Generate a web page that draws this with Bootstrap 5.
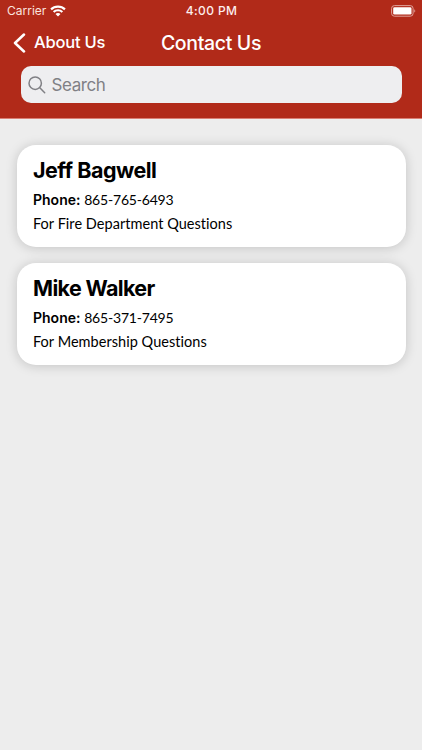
<!DOCTYPE html>
<html lang="en">
<head>
<meta charset="utf-8">
<meta name="viewport" content="width=device-width, initial-scale=1">
<title>Contact Us</title>
<link href="https://cdn.jsdelivr.net/npm/bootstrap@5.3.0/dist/css/bootstrap.min.css" rel="stylesheet">
<style>
body{background:#ededed;font-family:Inter,"Liberation Sans",sans-serif;color:#000;min-height:100vh}
.app-top{background:#b12a19;height:119px;color:#fff;border-bottom:1px solid #d97f74}
.status-bar{height:22px;padding:0 6px 0 7px;font-size:12px;line-height:22px}
.carrier{letter-spacing:0;color:#fbe3df}
.clock{font-weight:500;letter-spacing:.4px;color:#fdeeec}
.side{flex:1 1 0}
.title-bar{height:44px;padding:0 13px}
.back-link{color:#fff;font-size:16.500px;font-weight:500;letter-spacing:-.2px;gap:8px;padding-top:1px}
.page-title{font-size:19.500px;font-weight:500;letter-spacing:-.35px;line-height:24px;padding-bottom:3px}
.search-box{height:37px;margin:0 20.500px;background:#eeeef0;border-radius:10px;color:#808085;padding-left:7px;gap:6px}
.search-box input{font-size:17px;letter-spacing:-.4px;color:#808085;outline:0;line-height:24px}
.search-box input::placeholder{color:#808085;opacity:1}
.contact-list{padding:25.500px 16.500px;gap:16px}
.contact-card{height:102px;border-radius:19px;padding:11.500px 16.500px 0;box-shadow:0 1px 12px rgba(0,0,0,.18)}
.contact-name{font-size:21.500px;font-weight:650;line-height:28px;letter-spacing:-.5px}
.contact-name.wide-initial{letter-spacing:-.65px}
.contact-line{font-family:Lato,"Liberation Sans",sans-serif;font-size:14.500px;line-height:24px;letter-spacing:.04px;font-variant-ligatures:none}
.contact-line strong{font-family:Inter,"Liberation Sans",sans-serif;font-size:14px;font-weight:600;letter-spacing:0}
.phone-number{font-size:14px;letter-spacing:-.2px}
</style>
</head>
<body>
<header class="app-top">
  <div class="status-bar d-flex align-items-center">
    <div class="side d-flex align-items-center gap-1">
      <span class="carrier">Carrier</span>
      <svg width="16" height="12" viewBox="0 0 16 12" fill="#fff" aria-hidden="true"><path d="M8 .5C5 .5 2.300 1.700.3 3.600l1.500 1.600a9 9 0 0 1 12.400 0l1.500-1.600C13.700 1.700 11 .5 8 .5zM8 4.200c-2 0-3.800.8-5.100 2l1.500 1.600a5.200 5.200 0 0 1 7.200 0l1.500-1.600A7.300 7.300 0 0 0 8 4.200zM8 7.900c-1 0-1.900.4-2.500 1L8 11.500l2.500-2.600A3.600 3.600 0 0 0 8 7.900z"/></svg>
    </div>
    <div class="clock">4:00 PM</div>
    <div class="side d-flex justify-content-end">
      <svg width="25" height="12" viewBox="0 0 25 12" aria-hidden="true"><rect x=".6" y=".6" width="21.500" height="10.600" rx="2.800" fill="none" stroke="#dfa39c"/><rect x="2.200" y="2.200" width="18.300" height="7.400" rx="1.300" fill="#fff"/><path d="M23.300 4.200v3.400c1.300-.4 1.300-3 0-3.400z" fill="#dfa39c"/></svg>
    </div>
  </div>
  <nav class="title-bar d-flex align-items-center">
    <div class="side"><a href="#" class="back-link d-inline-flex align-items-center text-decoration-none"><svg width="13" height="20" viewBox="0 0 13 20" fill="none" stroke="#fff" stroke-width="2.500" stroke-linecap="round" stroke-linejoin="round" aria-hidden="true"><path d="M11 1.500 2 10l9 8.500"/></svg>About Us</a></div>
    <h1 class="page-title m-0">Contact Us</h1>
    <div class="side"></div>
  </nav>
  <div class="search-box d-flex align-items-center">
    <svg width="18" height="18" viewBox="0 0 18 18" fill="none" stroke="#808085" stroke-width="1.500" stroke-linecap="round" aria-hidden="true"><circle cx="7.200" cy="7.200" r="6.200"/><path d="m11.800 11.800 4.900 4.900"/></svg>
    <input type="text" class="border-0 bg-transparent p-0 flex-grow-1" placeholder="Search" aria-label="Search">
  </div>
</header>
<main class="contact-list d-flex flex-column">
  <article class="contact-card bg-white">
    <h2 class="contact-name m-0">Jeff Bagwell</h2>
    <div class="contact-line mt-1"><strong>Phone:</strong> <span class="phone-number">865-765-6493</span></div>
    <div class="contact-line">For Fire Department Questions</div>
  </article>
  <article class="contact-card bg-white">
    <h2 class="contact-name wide-initial m-0">Mike Walker</h2>
    <div class="contact-line mt-1"><strong>Phone:</strong> <span class="phone-number">865-371-7495</span></div>
    <div class="contact-line">For Membership Questions</div>
  </article>
</main>
<script src="https://cdn.jsdelivr.net/npm/bootstrap@5.3.0/dist/js/bootstrap.bundle.min.js"></script>
</body>
</html>
